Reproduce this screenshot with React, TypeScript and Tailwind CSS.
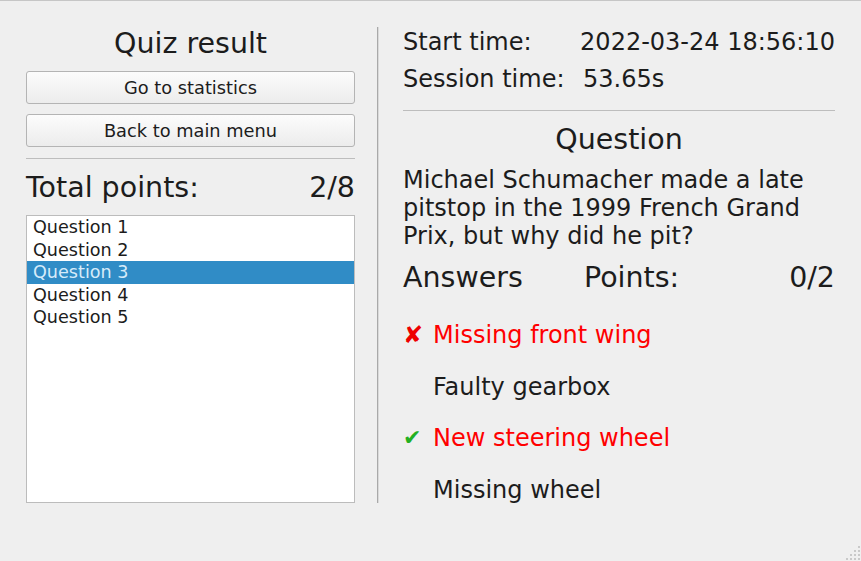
const QUESTIONS = ["Question 1", "Question 2", "Question 3", "Question 4", "Question 5"];

type Answer = {
  text: string;
  mark?: "wrong" | "right";
  picked: boolean;
};

const ANSWERS: Answer[] = [
  { text: "Missing front wing", mark: "wrong", picked: true },
  { text: "Faulty gearbox", picked: false },
  { text: "New steering wheel", mark: "right", picked: true },
  { text: "Missing wheel", picked: false },
];

function SizeGrip() {
  const dots = [
    [13, 1],
    [9, 5],
    [13, 5],
    [5, 9],
    [9, 9],
    [13, 9],
    [1, 13],
    [5, 13],
    [9, 13],
    [13, 13],
  ];
  return (
    <svg className="absolute bottom-0 right-0" width="16" height="16" viewBox="0 0 16 16">
      {dots.map(([x, y]) => (
        <rect key={`${x}-${y}`} x={x} y={y} width="2" height="2" fill="#c9c9c9" />
      ))}
    </svg>
  );
}

function QtButton({ label }: { label: string }) {
  return (
    <button className="flex h-[33px] w-full items-center justify-center rounded-[3px] border border-[#b4b4b4] bg-gradient-to-b from-[#fcfcfc] to-[#ececec] text-[17.8px] leading-none text-[#1c1c1c]">
      {label}
    </button>
  );
}

export default function App() {
  return (
    <div className="relative h-[561px] w-[861px] overflow-hidden border-t border-[#c6c6c6] bg-[#efefef] font-['DejaVu_Sans',sans-serif] text-[#1c1c1c]">
      <div className="flex px-[26px] pt-[27px]">
        {/* left side */}
        <div className="flex w-[329px] flex-col">
          <h1 className="text-center text-[28.5px] leading-[32px]">Quiz result</h1>
          <div className="mt-[11px]">
            <QtButton label="Go to statistics" />
          </div>
          <div className="mt-[10px]">
            <QtButton label="Back to main menu" />
          </div>
          <div className="mt-[11px] h-px bg-[#bdbdbd]" />
          <div className="mt-[13px] flex justify-between text-[28.5px] leading-[32px]">
            <span>Total points:</span>
            <span>2/8</span>
          </div>
          <ul className="mt-[11px] h-[288px] border border-[#bcbcbc] bg-white">
            {QUESTIONS.map((q, i) => (
              <li
                key={q}
                className={`h-[22.5px] px-[6px] text-[17.6px] leading-[22.5px] ${
                  i === 2 ? "bg-[#308cc6] text-[#d6ebfa]" : "text-[#1c1c1c]"
                }`}
              >
                {q}
              </li>
            ))}
          </ul>
        </div>

        {/* separator */}
        <div className="ml-[22px] -mt-px flex h-[476px] w-[2px]">
          <div className="w-px bg-[#a9a9a9]" />
          <div className="w-px bg-[#dadada]" />
        </div>

        {/* right side */}
        <div className="ml-[24px] flex w-[432px] flex-col text-[24px] leading-[28px]">
          <div className="flex whitespace-nowrap">
            <span className="w-[180px]">Start time:</span>
            <span>2022-03-24 18:56:10</span>
          </div>
          <div className="mt-[9px] flex whitespace-nowrap">
            <span className="w-[180px]">Session time:</span>
            <span>53.65s</span>
          </div>
          <div className="mt-[17px] h-px bg-[#bdbdbd]" />
          <h2 className="mt-[13px] text-center text-[28.5px] leading-[32px]">Question</h2>
          <p className="mt-[10px]">
            Michael Schumacher made a late pitstop in the 1999 French Grand Prix, but why did he pit?
          </p>
          <div className="mt-[12px] flex text-[28.5px] leading-[32px]">
            <span className="w-[181px]">Answers</span>
            <span className="flex-1">Points:</span>
            <span>0/2</span>
          </div>
          <ul className="mt-[27px] flex flex-col gap-[23.67px]">
            {ANSWERS.map((a) => (
              <li key={a.text} className="flex h-[28px] items-center">
                <span className="flex w-[30px] items-center">
                  {a.mark === "wrong" ? (
                    <span className="text-[24px] leading-[28px] text-[#ee0000]">✘</span>
                  ) : a.mark === "right" ? (
                    <span className="text-[22px] leading-[28px] text-[#22b022]">✔</span>
                  ) : null}
                </span>
                <span className={a.picked ? "text-[#ff0000]" : ""}>{a.text}</span>
              </li>
            ))}
          </ul>
        </div>
      </div>
      <SizeGrip />
    </div>
  );
}
